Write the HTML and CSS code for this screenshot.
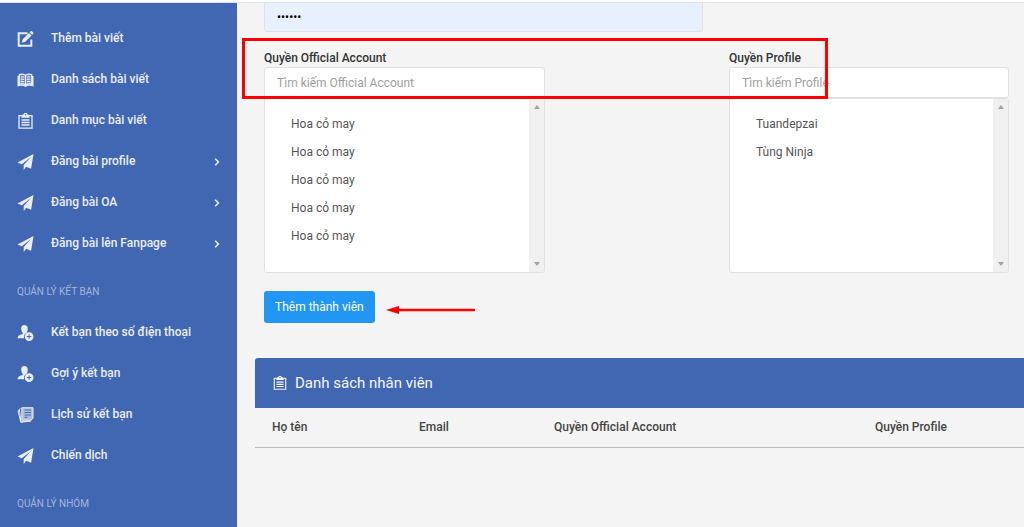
FILE: index.html
```html
<!DOCTYPE html>
<html lang="vi">
<head>
<meta charset="utf-8">
<meta name="viewport" content="width=device-width, initial-scale=1">
<title>Thêm thành viên</title>
<link rel="stylesheet" href="styles.css">
</head>
<body>
<svg class="defs" aria-hidden="true">
  <symbol id="edit" viewBox="0 0 16 16"><path d="M10 2.200H1.200v12.600h12.600V8.500" fill="none" stroke="currentColor" stroke-width="2"/><path d="M13.200.2q.7-.5 1.300.1l1.200 1.200q.6.700 0 1.300l-1 1-2.600-2.600zM11.400 1.900l2.700 2.700-6.300 6.200-3.500 1 .9-3.600z" fill="currentColor"/></symbol>
  <symbol id="book" viewBox="0 0 16 16"><path d="M8 3.200C6 1.900 3.500 1.900 1.800 2.600v9.500c2-.6 4.300-.5 6.200.8 1.900-1.300 4.200-1.400 6.200-.8V2.600C12.500 1.900 10 1.900 8 3.200z" fill="currentColor" fill-opacity=".25"/><path d="M8 3.200C6 1.900 3.500 1.900 1.800 2.600v9.500c2-.6 4.300-.5 6.200.8 1.900-1.300 4.200-1.400 6.200-.8V2.600C12.500 1.900 10 1.900 8 3.200zM8 3v10M.6 4v9.600c3-.8 5.500-.6 7.400.6 1.900-1.200 4.400-1.400 7.400-.6V4M3.200 5c1.200-.4 2.300-.3 3.400.2M3.200 7.300c1.200-.4 2.300-.3 3.400.2M3.200 9.600c1.200-.4 2.300-.3 3.400.2M12.800 5c-1.200-.4-2.300-.3-3.400.2M12.800 7.300c-1.200-.4-2.300-.3-3.400.2M12.800 9.600c-1.200-.4-2.300-.3-3.400.2" fill="none" stroke="currentColor" stroke-width="1.200"/></symbol>
  <symbol id="clip" viewBox="0 0 16 16"><path d="M5 2.600H1.500v12.600h13V2.600H11" fill="none" stroke="currentColor" stroke-width="1.300"/><path fill-rule="evenodd" d="M6.200 1.500a1.800 1.800 0 0 1 3.600 0H11l1.400 3.200H3.600L5 1.500zM8 1a.8.800 0 1 0 0 1.600.8.800 0 0 0 0-1.600z" fill="currentColor"/><path d="M4 7h8M4 9.500h8M4 12h8" stroke="currentColor" stroke-width="1.300"/></symbol>
  <symbol id="plane" viewBox="0 0 16 16"><path d="M16 0L0 8.600l4.300 1.700L13.500 3 6.200 11v5l2.500-3.300 4.900 2z" fill="currentColor"/></symbol>
  <symbol id="adduser" viewBox="0 0 16 16"><path d="M6.800 0C4.600 0 3.700 1.500 3.700 3.600c0 1.900.6 3.300 1.600 4.300v1C3 9.500.3 10.300 0 13.200h6.600A4.900 4.900 0 0 1 9.100 7.700C10 6.700 10.200 5 10.200 3.600 10.200 1.400 9 0 6.800 0z" fill="currentColor"/><path fill-rule="evenodd" d="M11.600 7.200a4.400 4.400 0 1 0 0 8.800 4.400 4.400 0 0 0 0-8.800zM11.100 9.400h1v1.700h1.700v1h-1.700v1.700h-1v-1.700H9.400v-1h1.700z" fill="currentColor"/></symbol>
  <symbol id="history" viewBox="0 0 16 16"><path d="M4.300.7h11.200v10.600l-2.200 1.900H4.300z" fill="currentColor" fill-opacity=".65" stroke="currentColor"/><path d="M3 1.700l-1.200.4 1.600 12.300L13 14M1.700 3.300l-1.200.5 2.800 11.500 10.500-1.400" fill="none" stroke="currentColor"/><path d="M7 3h6.500M7 5.500h6.500M7 8h6.500M7 10.300h3" stroke="#4267b2" stroke-width="1"/></symbol>
  <symbol id="chev" viewBox="0 0 6 8"><path d="M1.200.7l3.200 3.300-3.200 3.300" fill="none" stroke="currentColor" stroke-width="1.600"/></symbol>
</svg>
<div class="topbar"></div>
<div class="layout">
  <nav class="sidebar">
    <a class="item" href="#"><svg class="icon"><use href="#edit"/></svg><span>Thêm bài viết</span></a>
    <a class="item" href="#"><svg class="icon"><use href="#book"/></svg><span>Danh sách bài viết</span></a>
    <a class="item" href="#"><svg class="icon"><use href="#clip"/></svg><span>Danh mục bài viết</span></a>
    <a class="item" href="#"><svg class="icon"><use href="#plane"/></svg><span>Đăng bài profile</span><svg class="chev"><use href="#chev"/></svg></a>
    <a class="item" href="#"><svg class="icon"><use href="#plane"/></svg><span>Đăng bài OA</span><svg class="chev"><use href="#chev"/></svg></a>
    <a class="item" href="#"><svg class="icon"><use href="#plane"/></svg><span>Đăng bài lên Fanpage</span><svg class="chev"><use href="#chev"/></svg></a>
    <h2 class="section">QUẢN LÝ KẾT BẠN</h2>
    <a class="item" href="#"><svg class="icon"><use href="#adduser"/></svg><span>Kết bạn theo số điện thoại</span></a>
    <a class="item" href="#"><svg class="icon"><use href="#adduser"/></svg><span>Gợi ý kết bạn</span></a>
    <a class="item" href="#"><svg class="icon"><use href="#history"/></svg><span>Lịch sử kết bạn</span></a>
    <a class="item" href="#"><svg class="icon"><use href="#plane"/></svg><span>Chiến dịch</span></a>
    <h2 class="section">QUẢN LÝ NHÓM</h2>
  </nav>
  <main class="main">
    <form class="form">
      <input class="field password" type="password" value="123456" aria-label="Mật khẩu">
      <div class="group first">
        <label for="oa">Quyền Official Account</label>
        <input class="field" id="oa" type="text" placeholder="Tìm kiếm Official Account">
        <div class="list">
          <select multiple aria-label="Official Account">
            <option>Hoa cỏ may</option><option>Hoa cỏ may</option><option>Hoa cỏ may</option><option>Hoa cỏ may</option><option>Hoa cỏ may</option>
          </select>
          <div class="track"><i class="up"></i><i class="down"></i></div>
        </div>
      </div>
      <div class="group">
        <label for="pf">Quyền Profile</label>
        <input class="field" id="pf" type="text" placeholder="Tìm kiếm Profile">
        <div class="list">
          <select multiple aria-label="Profile">
            <option>Tuandepzai</option><option>Tùng Ninja</option>
          </select>
          <div class="track"><i class="up"></i><i class="down"></i></div>
        </div>
      </div>
      <button class="submit" type="button">Thêm thành viên</button>
    </form>
    <section class="panel">
      <h1 class="panel-title"><svg class="title-icon"><use href="#clip"/></svg>Danh sách nhân viên</h1>
      <table class="staff">
        <thead><tr><th class="c-name">Họ tên</th><th class="c-mail">Email</th><th class="c-oa">Quyền Official Account</th><th>Quyền Profile</th></tr></thead>
      </table>
    </section>
    <div class="highlight"></div>
    <svg class="arrow" viewBox="0 0 90 8"><path d="M11 4h77" stroke="#f00" stroke-width="2.400" stroke-linecap="round"/><path d="M0 4L13 0v8z" fill="#f00"/></svg>
  </main>
</div>
</body>
</html>
```
FILE: styles.css
```css
* { box-sizing: border-box; }
body {
  margin: 0;
  height: 100vh;
  overflow: hidden;
  display: flex;
  flex-direction: column;
  background: #f4f4f4;
  color: #444;
  font: 12px/16px Roboto, "Liberation Sans", sans-serif;
}
.defs { position: absolute; width: 0; height: 0; }
.topbar { flex: none; height: 3px; background: #fff; border-bottom: 1px solid #dfe1e6; }
.layout { flex: 1; min-height: 0; display: flex; }
.sidebar { flex: none; width: 237px; padding-top: 15px; background: #4267b2; overflow: hidden; }
.item {
  display: flex;
  align-items: center;
  height: 41px;
  padding: 0 17px;
  color: #e9edf6;
  font-weight: 500;
  text-decoration: none;
}
.item span { flex: 1; margin-left: 17px; padding-bottom: 1px; }
.icon { width: 17px; height: 16px; }
.chev { width: 6px; height: 8px; }
.section {
  margin: 0;
  padding: 20px 17px 12px;
  font-size: 10px;
  line-height: 16px;
  font-weight: 400;
  color: #a3b5dc;
}
.main { position: relative; flex: 1; min-width: 0; overflow: hidden; padding-left: 18px; }
.form {
  display: grid;
  grid-template-columns: minmax(0, 439px) minmax(280px, 1fr);
  column-gap: 26px;
  padding: 0 15px 0 9px;
}
.field {
  display: block;
  width: 100%;
  height: 31px;
  padding: 0 12px;
  border: 1px solid #e1e1e1;
  border-radius: 3px;
  background: #fff;
  color: #000;
  font: inherit;
  outline: none;
}
.field::placeholder { color: #a0a0a0; opacity: 1; }
.password { grid-column: 1; margin-top: -2px; background: #e8f0fe; }
.group { max-width: 281px; padding-top: 18px; }
.first { grid-column: 1; }
.group label { display: block; margin-bottom: 1px; font-weight: 500; color: #333; }
.list {
  display: flex;
  height: 175px;
  border: 1px solid #e1e1e1;
  border-radius: 3px;
  background: #fff;
}
.list select {
  flex: 1;
  min-width: 0;
  padding: 12px 0 0;
  border: 0;
  background: none;
  color: #555;
  font: inherit;
  outline: none;
  overflow: hidden;
}
.list option { height: 28px; padding: 6px 26px; line-height: 16px; }
.track {
  display: flex;
  flex-direction: column;
  align-items: center;
  justify-content: space-between;
  width: 15px;
  padding: 6px 0;
  background: #f0f0f0;
}
.up, .down { border: 3px solid transparent; }
.up { border-top: 0; border-bottom: 4px solid #a3a3a3; }
.down { border-bottom: 0; border-top: 4px solid #a3a3a3; }
.submit {
  grid-column: 1;
  justify-self: start;
  height: 32px;
  margin-top: 18px;
  padding: 0 11px;
  border: 0;
  border-radius: 3px;
  background: #2196f3;
  color: #fff;
  font: inherit;
}
.panel { margin-top: 35px; }
.panel-title {
  display: flex;
  align-items: center;
  gap: 8px;
  height: 50px;
  margin: 0;
  padding: 0 18px;
  border-radius: 3px 0 0 0;
  background: #4267b2;
  color: #f4f6fb;
  font-size: 15px;
  font-weight: 400;
}
.title-icon { width: 14px; height: 14px; }
.staff { width: 100%; table-layout: fixed; border-collapse: collapse; }
.staff th {
  height: 39px;
  padding: 0 0 0 17px;
  border-bottom: 1px solid #bbb;
  text-align: left;
  font-weight: 500;
}
.c-name { width: 147px; }
.c-mail { width: 135px; }
.c-oa { width: 321px; }
.highlight {
  position: absolute;
  left: 5px;
  top: 35px;
  width: 586px;
  height: 61px;
  border: 3px solid #f00;
}
.arrow { position: absolute; left: 149px; top: 303px; width: 90px; height: 8px; }
```
